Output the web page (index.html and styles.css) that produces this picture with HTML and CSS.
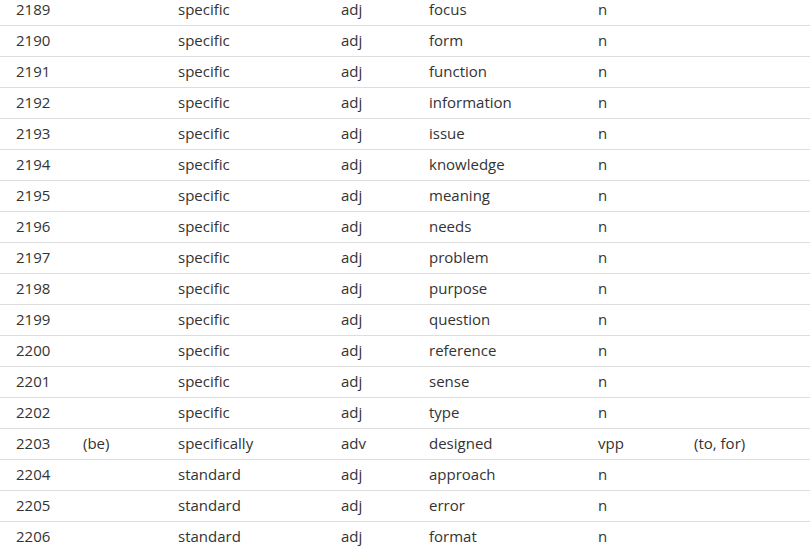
FILE: index.html
```html
<!DOCTYPE html>
<html>
<head>
<meta charset="utf-8">
<link rel="stylesheet" href="styles.css">
</head>
<body>
<div class="words">
<div class="row"><span>2189</span><span></span><span>specific</span><span>adj</span><span>focus</span><span>n</span><span></span></div>
<div class="row"><span>2190</span><span></span><span>specific</span><span>adj</span><span>form</span><span>n</span><span></span></div>
<div class="row"><span>2191</span><span></span><span>specific</span><span>adj</span><span>function</span><span>n</span><span></span></div>
<div class="row"><span>2192</span><span></span><span>specific</span><span>adj</span><span>information</span><span>n</span><span></span></div>
<div class="row"><span>2193</span><span></span><span>specific</span><span>adj</span><span>issue</span><span>n</span><span></span></div>
<div class="row"><span>2194</span><span></span><span>specific</span><span>adj</span><span>knowledge</span><span>n</span><span></span></div>
<div class="row"><span>2195</span><span></span><span>specific</span><span>adj</span><span>meaning</span><span>n</span><span></span></div>
<div class="row"><span>2196</span><span></span><span>specific</span><span>adj</span><span>needs</span><span>n</span><span></span></div>
<div class="row"><span>2197</span><span></span><span>specific</span><span>adj</span><span>problem</span><span>n</span><span></span></div>
<div class="row"><span>2198</span><span></span><span>specific</span><span>adj</span><span>purpose</span><span>n</span><span></span></div>
<div class="row"><span>2199</span><span></span><span>specific</span><span>adj</span><span>question</span><span>n</span><span></span></div>
<div class="row"><span>2200</span><span></span><span>specific</span><span>adj</span><span>reference</span><span>n</span><span></span></div>
<div class="row"><span>2201</span><span></span><span>specific</span><span>adj</span><span>sense</span><span>n</span><span></span></div>
<div class="row"><span>2202</span><span></span><span>specific</span><span>adj</span><span>type</span><span>n</span><span></span></div>
<div class="row"><span>2203</span><span>(be)</span><span>specifically</span><span>adv</span><span>designed</span><span>vpp</span><span>(to, for)</span></div>
<div class="row"><span>2204</span><span></span><span>standard</span><span>adj</span><span>approach</span><span>n</span><span></span></div>
<div class="row"><span>2205</span><span></span><span>standard</span><span>adj</span><span>error</span><span>n</span><span></span></div>
<div class="row"><span>2206</span><span></span><span>standard</span><span>adj</span><span>format</span><span>n</span><span></span></div>
</div>
</body>
</html>
```
FILE: styles.css
```css
html, body {
  margin: 0;
  padding: 0;
  background: #fff;
  overflow: hidden;
}
.words {
  margin-top: -5px;
  font-family: "Open Sans", "Noto Sans", sans-serif;
  font-size: 15px;
  color: #333;
}
.row {
  display: grid;
  grid-template-columns: 67px 95px 163px 88px 169px 96px 1fr;
  align-items: center;
  height: 28px;
  padding: 0 0 2px 16px;
  border-bottom: 1px solid #ddd;
  line-height: 20px;
  white-space: nowrap;
}
```
